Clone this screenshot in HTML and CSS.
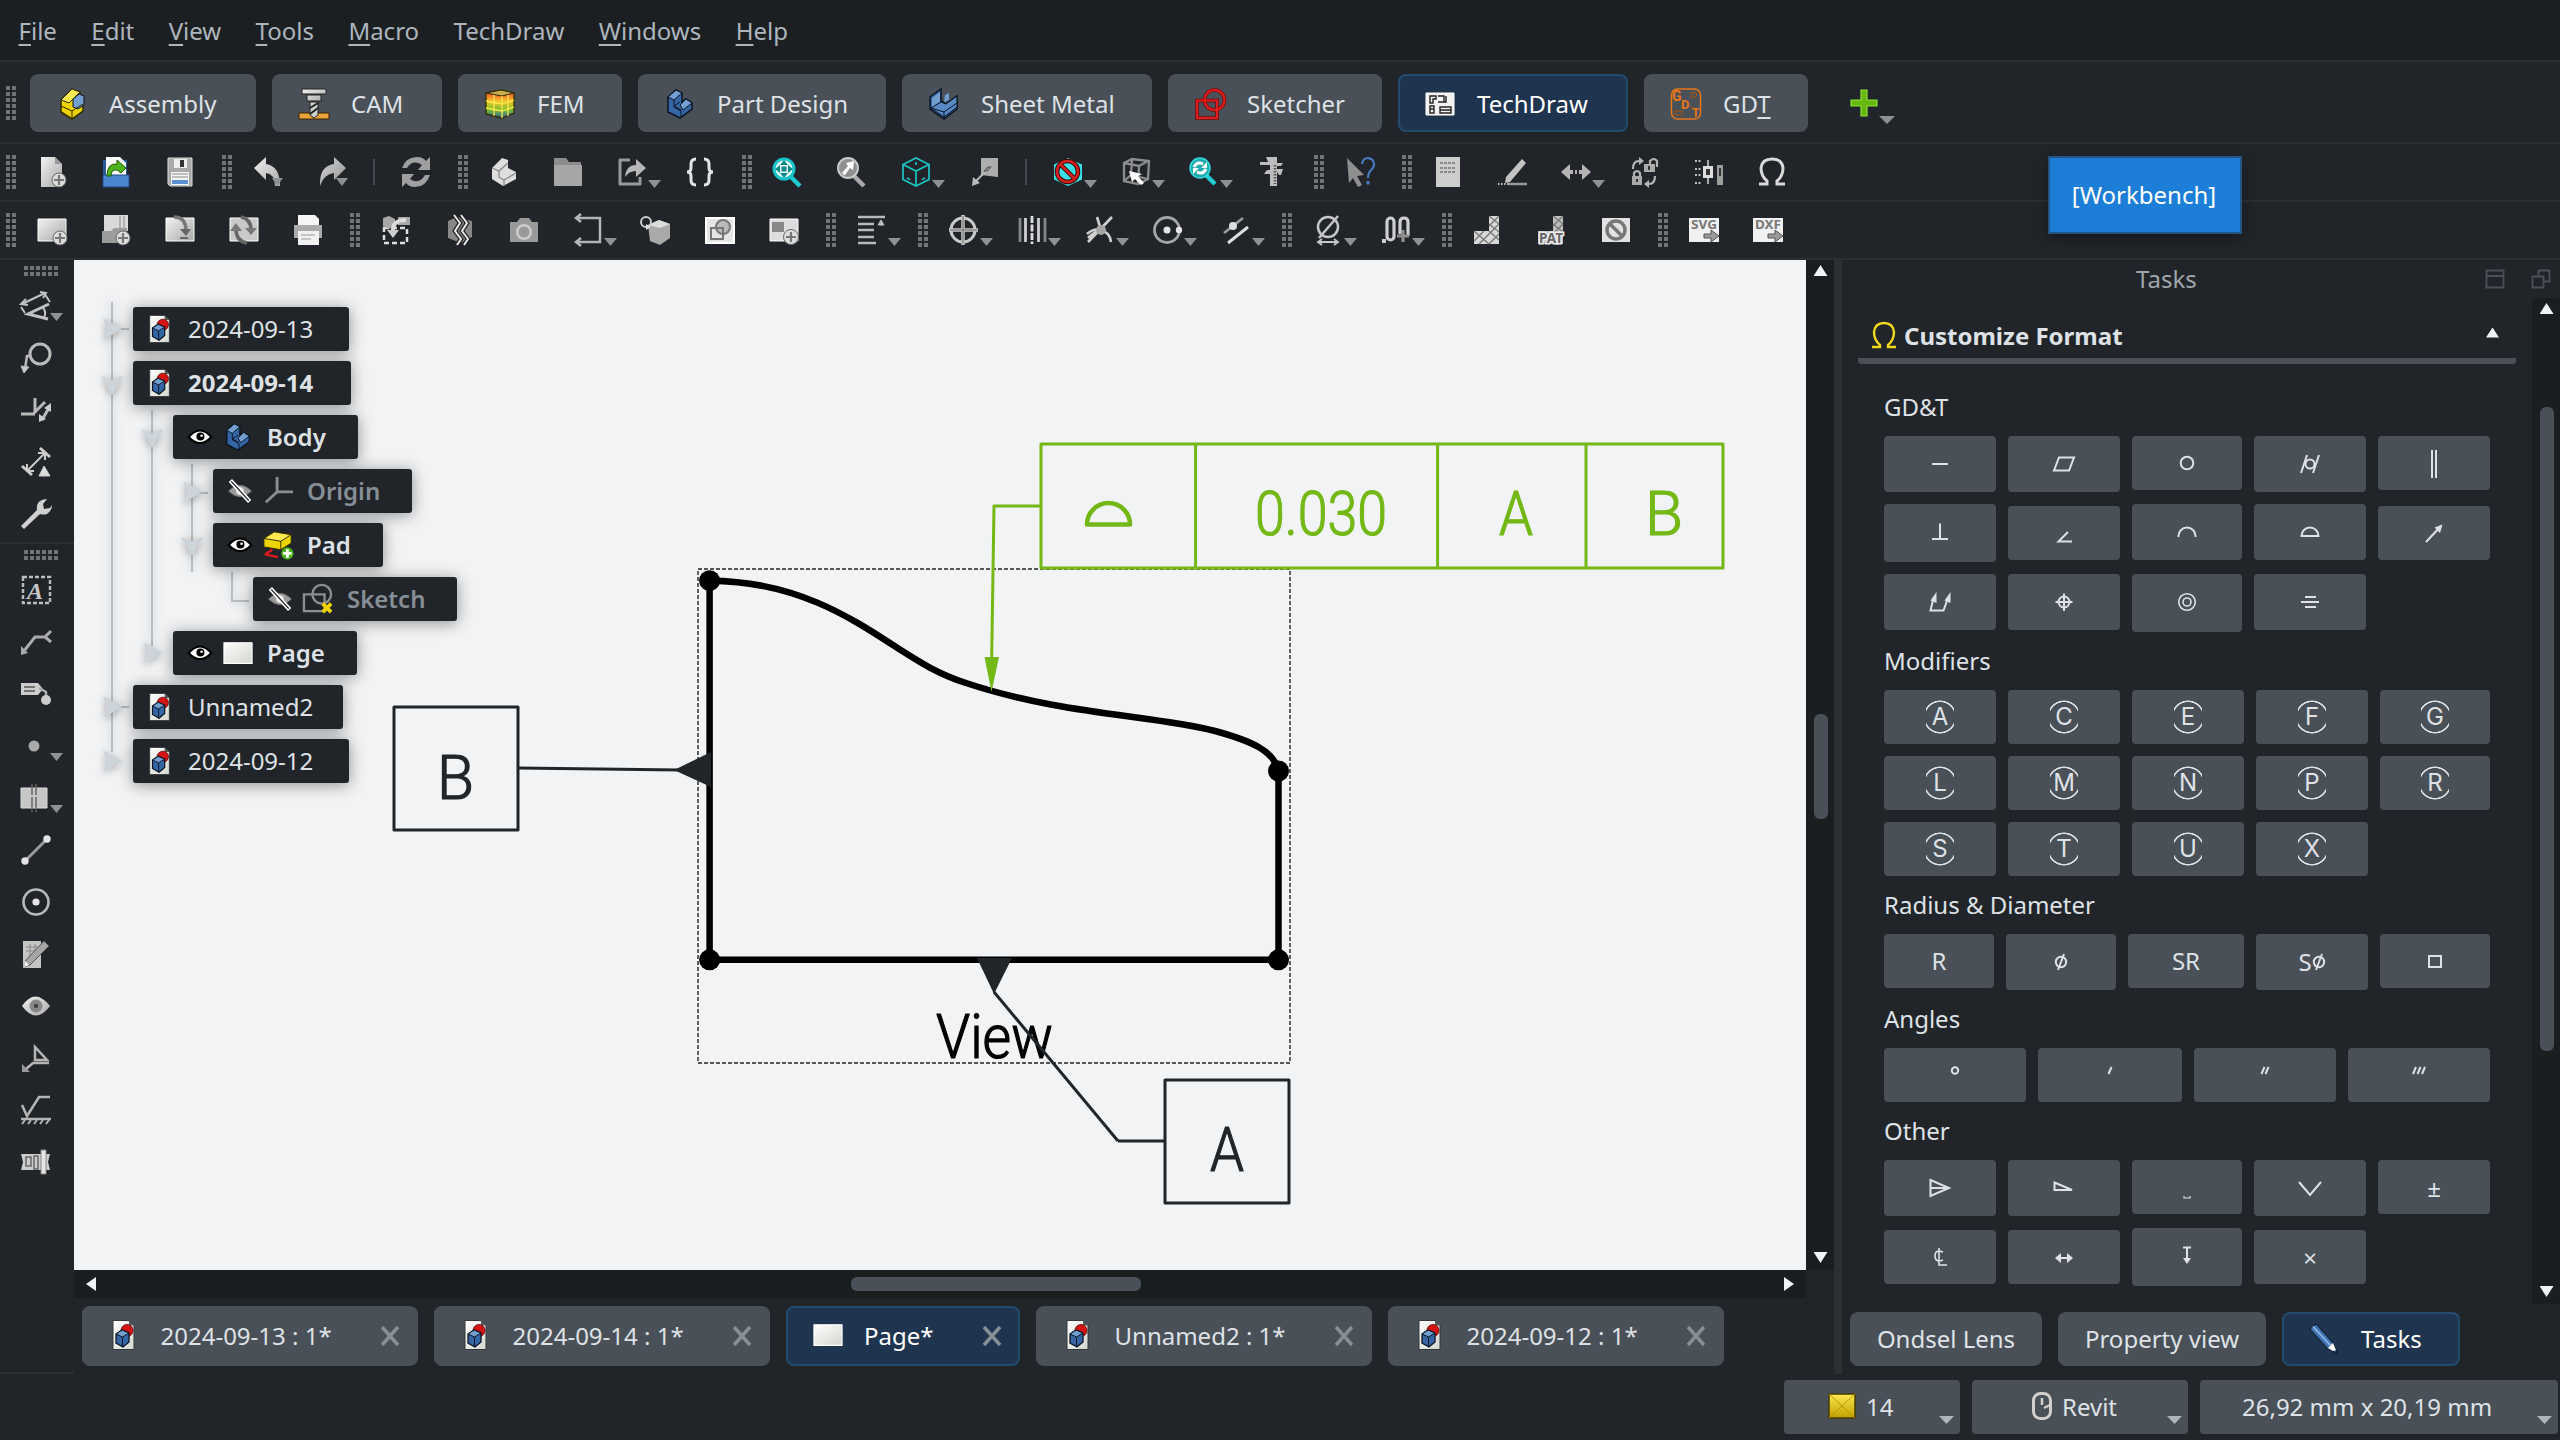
FILE: index.html
```html
<!DOCTYPE html>
<html lang="en">
<head>
<meta charset="utf-8">
<title>TechDraw</title>
<link rel="stylesheet" href="styles.css">
</head>
<body>
<svg class="defs" width="0" height="0" aria-hidden="true">
  <defs>
    <linearGradient id="g" x1="0" y1="0" x2="1" y2="1"><stop offset="0" stop-color="#f2f2f2"/><stop offset="1" stop-color="#a8a8a8"/></linearGradient>
    <linearGradient id="pg" x1="0" y1="0" x2="1" y2="1"><stop offset="0" stop-color="#fff"/><stop offset="1" stop-color="#d3d7cf"/></linearGradient>
    <linearGradient id="yl" x1="0" y1="0" x2="0" y2="1"><stop offset="0" stop-color="#fce94f"/><stop offset="1" stop-color="#c4a000"/></linearGradient>
    <linearGradient id="heat" x1="0" y1="0" x2="0" y2="1"><stop offset="0" stop-color="#ef2929"/><stop offset=".4" stop-color="#f5c52b"/><stop offset=".7" stop-color="#7bbf2a"/><stop offset="1" stop-color="#3465a4"/></linearGradient>
  </defs>
  <symbol id="doc" viewBox="0 0 32 32"><path d="M5 1.500h16l5 5v24H5z" fill="url(#pg)" stroke="#33383a"/><path d="M21 1.500v5h5z" fill="#555"/><circle cx="19" cy="11.500" r="6" fill="#d41414" stroke="#5c0000" stroke-width=".8"/><path d="M8 15l6-4 7 3v9l-6 5-7-4z" fill="#3465a4" stroke="#0b1521" stroke-width="1.300"/><path d="M8 15l6.500 3L21 14l-7-3z" fill="#729fcf" stroke="#0b1521"/><path d="M14.500 18v10" stroke="#0b1521"/></symbol>
  <symbol id="eye" viewBox="0 0 32 32"><path d="M3 16q13-15 26 0-13 14-26 0z" fill="#fff" stroke="#000" stroke-width="2.400"/><circle cx="16.500" cy="15.500" r="4.600" fill="#000"/><circle cx="17.800" cy="14.600" r="1.500" fill="#fff"/></symbol>
  <symbol id="noeye" viewBox="0 0 32 32"><path d="M3 16q13-13 26 0-13 13-26 0z" fill="#9a9a9a" stroke="#777"/><circle cx="16" cy="16" r="4.500" fill="#ddd"/><path d="M5 4l22 24" stroke="#fff" stroke-width="5"/><path d="M6 5l20 22" stroke="#222" stroke-width="1.600"/></symbol>
  <symbol id="body" viewBox="0 0 32 32"><path d="M4 9l8-7 6 3v9l4-3 6 4v6l-12 9-12-6z" fill="#3465a4" stroke="#0b1521" stroke-width="1.500"/><path d="M4 9l8-7 6 3-8 7zM16 17l6-6 6 4-9 7z" fill="#729fcf" stroke="#0b1521"/><path d="M10 12v7l7 4v6M17 22l-7-4 6-4" fill="none" stroke="#0b1521"/></symbol>
  <symbol id="sheet" viewBox="0 0 32 32"><path d="M1 5h30v22H1z" fill="url(#pg)" stroke="#fff" stroke-width="1.200"/></symbol>
</svg>

<div class="app">
  <nav class="menubar">
    <span><u>F</u>ile</span><span><u>E</u>dit</span><span><u>V</u>iew</span><span><u>T</u>ools</span><span><u>M</u>acro</span><span>TechDraw</span><span><u>W</u>indows</span><span><u>H</u>elp</span>
  </nav>

  <div class="workbenches">
    <i class="grip"></i>
    <div class="wb assembly"><svg viewBox="0 0 32 32"><path d="M5 12L16 1l8 3v8l3-1v12L16 31 5 24z" fill="#edd400" stroke="#302b00" stroke-width="1.500"/><path d="M5 12l11-11 8 3-11 11z" fill="#fce94f" stroke="#302b00"/><path d="M17 11l6-5 5 2v9l-6 4-5-2z" fill="#729fcf" stroke="#0b1521"/><path d="M5 18l11 5 11-7M16 23v8" fill="none" stroke="#302b00"/></svg>Assembly</div>
    <div class="wb cam"><svg viewBox="0 0 32 32"><path d="M4 1h24v5H4zM9 7h14v6H9z" fill="url(#g)" stroke="#222"/><path d="M1 25h30v6H1z" fill="#e9a33b" stroke="#3a2000"/><path d="M12 14h8v13l-4 3-4-3z" fill="#cfd3cf" stroke="#222"/><path d="M12 20l8-5M12 26l8-6" stroke="#222" stroke-width="2"/></svg>CAM</div>
    <div class="wb fem"><svg viewBox="0 0 32 32"><path d="M2 5l15-3 13 3v20l-12 5-16-4z" fill="url(#heat)" stroke="#302b00" stroke-width="1.300"/><path d="M2 5l15-3 13 3-12 3z" fill="#c9ad4e" stroke="#302b00"/><path d="M18 8v22M10 7v21M24 7v21M2 13l16 3 12-4M2 20l16 3 12-4" fill="none" stroke="#fce94f" stroke-width="1.300"/></svg>FEM</div>
    <div class="wb part"><svg viewBox="0 0 32 32"><use href="#body"/></svg>Part Design</div>
    <div class="wb metal"><svg viewBox="0 0 32 32"><path d="M2 9l11-8v12l5 3 11-8v13L16 31 2 21z" fill="#3465a4" stroke="#0b1521" stroke-width="1.500"/><path d="M4 10l8-6v10l-8 5zM17 7l4-2v7l-5 2z" fill="#729fcf"/><path d="M3 20l10-6 5 2 11-8v11L16 29z" fill="#5a8ac6" stroke="#0b1521"/><path d="M3 20l13 4 13-9M16 24v6" fill="none" stroke="#0b1521"/></svg>Sheet Metal</div>
    <div class="wb sketcher"><svg viewBox="0 0 32 32" fill="none"><circle cx="20.500" cy="12" r="10" stroke="#7c0909" stroke-width="3.600"/><path d="M3 12.500h20v17.500H3z" stroke="#7c0909" stroke-width="3.600"/><circle cx="20.500" cy="12" r="10" stroke="#e01b1b" stroke-width="2"/><path d="M3 12.500h20v17.500H3z" stroke="#e01b1b" stroke-width="2"/></svg>Sketcher</div>
    <div class="wb techdraw active"><svg viewBox="0 0 32 32"><path d="M2 5h28v22H2z" fill="#f2f2f2" stroke="#fff"/><path d="M6 8h6v3H9v4H6zM14 8h6v6h-6M6 18h4v7H6zM16 19h11v6H16zM16 22h11M6 21h4M22 8v6h-4" fill="none" stroke="#222" stroke-width="1.400"/></svg>TechDraw</div>
    <div class="wb tolerance"><svg viewBox="0 0 32 32"><rect x="1.500" y="1" width="29" height="30" rx="6" fill="none" stroke="#e8761a" stroke-width="1.500"/><g class="gdt"><text x="2" y="13" font-size="14">G</text><text x="11" y="21" font-size="13">D</text><text x="22" y="29" font-size="12">T</text></g><path d="M21 5h6l-1 4h-5zM20 18l3 2M5 23h7v4H5z" fill="none" stroke="#a8530d"/></svg><span>GD<u>T</u></span></div>
    <div class="tool drop add"><svg viewBox="0 0 32 32"><path d="M13 3h6v10h10v6H19v10h-6V19H3v-6h10z" fill="#67b80e" stroke="#8ae234" stroke-width="1.200"/></svg></div>
  </div>

  <div class="toolbar">
    <i class="grip"></i>
    <span class="tool"><svg viewBox="0 0 32 32"><path d="M5 1h14l7 7v23H5z" fill="url(#g)"/><path d="M19 1v7h7z" fill="#999"/><circle cx="23" cy="24" r="7" fill="#ddd" stroke="#666"/><path d="M23 19v10M18 24h10" stroke="#777" stroke-width="2.200"/></svg></span>
    <span class="tool"><svg viewBox="0 0 32 32"><path d="M3 4h24v26H3z" fill="#2a5a9c"/><path d="M6 1h14l6 6v14H6z" fill="#fafafa"/><path d="M3 19h26v12H3z" fill="#4a86cf" stroke="#204a87"/><path d="M7 20q0-13 10-12V4l9 8-5 5-4-3q-6-1-6 6z" fill="#4fb31b" stroke="#1d5c06"/></svg></span>
    <span class="tool"><svg viewBox="0 0 32 32"><path d="M4 2h24v28H6l-2-2z" fill="#a9a9a9" stroke="#ddd"/><path d="M10 3h13v9H10z" fill="#eee"/><path d="M16 4h4v7h-4z" fill="#333"/><path d="M7 16h18v13H7z" fill="#f4f4f4"/><path d="M8 18h16M8 21h16" stroke="#888"/><path d="M8 24h16v4H8z" fill="#5b8fd6"/></svg></span>
    <i class="grip"></i>
    <span class="tool"><svg viewBox="0 0 32 32"><path d="M2 12L14 1v7q14 2 14 22h-5q0-12-9-13v7z" fill="url(#g)"/><path d="M20 22h11l-6 8z" fill="#8d9196"/></svg></span>
    <span class="tool"><svg viewBox="0 0 32 32"><path d="M30 12L18 1v7Q3 10 4 30q4-12 14-13v7z" fill="url(#g)" opacity=".85"/><path d="M20 22h12l-6 8z" fill="#8d9196"/></svg></span>
    <i class="sep"></i>
    <span class="tool"><svg viewBox="0 0 32 32" fill="#9f9f9f"><path d="M2 12Q6 1 17 1q6 0 9 4l4-4v13H18l4-5q-9-6-15 3z"/><path d="M30 19q-4 12-15 12-6 0-9-4l-4 4V18h12l-4 5q9 6 15-4z"/></svg></span>
    <i class="grip"></i>
    <span class="tool"><svg viewBox="0 0 32 32"><path d="M4 12l10-10 6 2v8l8 4v7l-13 7-11-7z" fill="#dedede"/><path d="M4 12l7 3 9-8M11 15v6l5 3 12-7M16 24v6" fill="none" stroke="#888" stroke-width="1.300"/></svg></span>
    <span class="tool"><svg viewBox="0 0 32 32"><path d="M2 2h12l3 4h12v24H2z" fill="#8c8c8c"/><path d="M2 9h28v21H2z" fill="#a6a6a6"/></svg></span>
    <span class="tool drop"><svg viewBox="0 0 32 32" fill="none"><path d="M14 4H4v24h20v-7" stroke="#999" stroke-width="3" stroke-linejoin="round"/><path d="M9 21Q10 9 20 9V3l10 9-10 9v-6q-7 0-11 6z" fill="#b7b7b7"/></svg></span>
    <span class="tool"><svg viewBox="0 0 32 32" fill="none" stroke="#e3e3e3" stroke-width="3"><path d="M12 3Q7 3 7 8v4q0 4-4 4 4 0 4 4v4q0 5 5 5M20 3q5 0 5 5v4q0 4 4 4-4 0-4 4v4q0 5-5 5"/></svg></span>
    <i class="grip"></i>
    <span class="tool"><svg viewBox="0 0 32 32"><path d="M18 20l10 10" stroke="#20c9cf" stroke-width="4.500"/><circle cx="12" cy="13" r="10" fill="#e8fbfb" stroke="#15c3c9" stroke-width="3"/><path d="M12 4l4 5H8zM12 22l4-5H8zM3 13l5-4v8zM21 13l-5-4v8zM9.500 10.500h5v5h-5z" fill="#0c8a90"/></svg></span>
    <span class="tool"><svg viewBox="0 0 32 32"><path d="M18 20l10 10" stroke="#aaa" stroke-width="4.500"/><circle cx="12" cy="12" r="10" fill="#8f8f8f" stroke="#c9c9c9" stroke-width="2"/><path d="M8 19l-2-2 6-7-2-3 8-2-1 9-3-2-5 7z" fill="#fff"/></svg></span>
    <span class="tool drop"><svg viewBox="0 0 32 32" fill="none" stroke="#1cc5c0" stroke-width="1.700"><path d="M16 2l13 6.500v15L16 30 3 23.500v-15zM3 8.500L16 15l13-6.500M16 15v15M16 6v3M7 22l3 1.500M22 23.500l3-1.500"/></svg></span>
    <span class="tool"><svg viewBox="0 0 32 32"><path d="M13 2h17v19l-17-2z" fill="#adadad"/><path d="M23 10L8 25" stroke="#b9b9b9" stroke-width="2"/><path d="M16 15.500l4-1 3-4-4 1z" fill="#888" stroke="#555"/><path d="M4 30l1-9 7 6z" fill="#bbb"/></svg></span>
    <i class="sep"></i>
    <span class="tool drop"><svg viewBox="0 0 32 32"><path d="M16 2l14 6.500v15L16 30 2 23.500v-15z" fill="#38dfe4"/><g fill="none"><circle cx="15.500" cy="15.500" r="10.500" stroke="#3d0000" stroke-width="4.500"/><path d="M8 8l15 15" stroke="#3d0000" stroke-width="4.500"/><circle cx="15.500" cy="15.500" r="10.500" stroke="#d21f1f" stroke-width="2.600"/><path d="M8 8l15 15" stroke="#d21f1f" stroke-width="2.600"/></g></svg></span>
    <span class="tool drop"><svg viewBox="0 0 32 32"><path d="M4 7l8-4 17 2-1 18-10 5-14-3zM4 7l15 3 9-5M19 10l-1 18M12 3l-1 16-7 6M11 19l17 4" fill="none" stroke="#8c8c8c" stroke-width="2.300"/><path d="M9 15l3 11 3-3 6 6 3-2-6-7 4-2z" fill="#fff"/></svg></span>
    <span class="tool drop"><svg viewBox="0 0 32 32"><path d="M18 19l9 9" stroke="#20cfd5" stroke-width="4.500"/><circle cx="12" cy="12" r="10" fill="#20a9ae" stroke="#35dbe0" stroke-width="1.500"/><path d="M6 11q3-6 9-3M18 13q-3 6-9 3" fill="none" stroke="#fff" stroke-width="3"/><path d="M19 6v6h-6zM5 18v-6h6z" fill="#fff"/></svg></span>
    <span class="tool"><svg viewBox="0 0 32 32"><path d="M10 1h11v6h6l-2 3h-4v3h6l-2 6h-2l-2-3v14h-7V18H8l3-4h3V9H4V6h8z" fill="#bdbdbd"/><path d="M19 9v19" stroke="#555" stroke-dasharray="1.500 1.500" stroke-width="2.500"/></svg></span>
    <i class="grip"></i>
    <span class="tool"><svg viewBox="0 0 32 32"><path d="M3 2l17 17-7 1 5 9-4 2-5-9-4 5z" fill="#8f8f8f"/><path d="M18 8q1-6 6-6 6 1 6 6 0 4-3 6-3 3-3 8" fill="none" stroke="#4a7cc4" stroke-width="2"/><path d="M22.500 25h3v3.500h-3z" fill="#4a7cc4"/></svg></span>
    <i class="grip"></i>
    <span class="tool"><svg viewBox="0 0 32 32"><path d="M4 1h24v30H4z" fill="#cdcdcd"/><path d="M8 7h16M8 12h16M8 16h16" stroke="#777" stroke-width="1.600" stroke-dasharray="3 1"/></svg></span>
    <span class="tool"><svg viewBox="0 0 32 32"><path d="M26 3l4 4-16 19-5 1 1-6z" fill="#c4c4c4"/><path d="M2 28h10" stroke="#bbb" stroke-dasharray="1.500 1.500" stroke-width="2"/><path d="M12 28h19" stroke="#999" stroke-width="2.500"/></svg></span>
    <span class="tool drop"><svg viewBox="0 0 32 32" fill="#b4b4b4"><path d="M1 16l9-8v6h3v4h-3v6zM31 16l-9-8v6h-3v4h3v6zM15 14h2v4h-2z"/></svg></span>
    <span class="tool"><svg viewBox="0 0 32 32"><path d="M4 20h10v9H4zM16 8h11v8H16z" fill="#aaa"/><path d="M6 20v-3q3-4 6 0v3M22 8V5q4-4 7 0v6M5 13q0-8 6-8M27 20q0 8-6 8" fill="none" stroke="#b3b3b3" stroke-width="2.200"/><path d="M11 1v8l5-4zM21 24v8l-5-4z" fill="#b3b3b3"/><path d="M9 23v3M21 10v4" stroke="#333" stroke-width="2"/></svg></span>
    <span class="tool"><svg viewBox="0 0 32 32" fill="none"><path d="M3 5h7M3 27h7M3 13h7M3 19h7" stroke="#bbb" stroke-width="2" stroke-dasharray="2 1.500"/><path d="M11 10h10v12H11z" fill="#ddd"/><path d="M14 13h4v6h-4z" fill="#333"/><path d="M25 9h6v20h-6z" fill="#9d9d9d"/><path d="M28 12v8" stroke="#333" stroke-width="2"/><path d="M16 4v6M16 22v6" stroke="#aaa" stroke-width="2"/></svg></span>
    <span class="tool"><svg viewBox="0 0 32 32"><path d="M3 28h8v-3Q5 20 5 12q1-9 11-9t11 9q0 8-6 13v3h8" fill="none" stroke="#d9d9d9" stroke-width="3"/></svg></span>
  </div>

  <div class="toolbar">
    <i class="grip"></i>
    <span class="tool"><svg viewBox="0 0 32 32"><path d="M2 5h28v22H2z" fill="url(#g)" stroke="#fff"/><circle cx="24" cy="24" r="7" fill="#ddd" stroke="#666"/><path d="M24 19v10M19 24h10" stroke="#777" stroke-width="2.200"/></svg></span>
    <span class="tool"><svg viewBox="0 0 32 32"><path d="M4 1h24v16H4z" fill="#d9d9d9"/><path d="M20 2v14M24 2v14" stroke="#888"/><path d="M2 17h9l3-3h13v15H2z" fill="#9c9c9c"/><circle cx="23" cy="24" r="7" fill="#ddd" stroke="#666"/><path d="M23 19v10M18 24h10" stroke="#777" stroke-width="2.200"/></svg></span>
    <span class="tool"><svg viewBox="0 0 32 32"><path d="M2 4h28v23H2z" fill="url(#g)" stroke="#fff"/><path d="M10 3q12 0 12 14" fill="none" stroke="#777" stroke-width="3.500"/><path d="M16 15h11l-5 7zM16 23h8v2h-8z" fill="#666"/></svg></span>
    <span class="tool"><svg viewBox="0 0 32 32"><path d="M2 4h28v23H2z" fill="#c9c9c9" stroke="#fff"/><path d="M13 3q10 2 10 13M19 29Q8 27 8 15" fill="none" stroke="#666" stroke-width="3.500"/><path d="M17 14h12l-6 7zM2 17h12L8 9z" fill="#777"/></svg></span>
    <span class="tool"><svg viewBox="0 0 32 32"><path d="M6 1h17l4 4v6H6z" fill="#f5f5f5"/><path d="M2 11h28v13H2z" fill="#aaa"/><path d="M6 17h21v14H6z" fill="#f0f0f0"/><path d="M9 21h14M9 25h10" stroke="#999"/></svg></span>
    <i class="grip"></i>
    <span class="tool"><svg viewBox="0 0 32 32" fill="none"><path d="M4 14h23v15H4z" stroke="#ddd" stroke-width="2.500" stroke-dasharray="5 3"/><path d="M3 4l6-2 6 3v7l-6 3-6-3zM18 3h12v8H18z" fill="#a8a8a8"/><path d="M26 6q-14 0-13 12" stroke="#ddd" stroke-width="4"/><path d="M7 16h12l-6 8z" fill="#ccc"/></svg></span>
    <span class="tool"><svg viewBox="0 0 32 32"><path d="M4 7l9-4 15 4v16l-11 6-13-5z" fill="#888"/><path d="M10 1l6 8-5 8 6 8-4 6M17 1l6 8-5 8 6 8-4 6" fill="none" stroke="#222" stroke-width="4.500"/><path d="M10 1l6 8-5 8 6 8-4 6M17 1l6 8-5 8 6 8-4 6" fill="none" stroke="#e8e8e8" stroke-width="2"/></svg></span>
    <span class="tool"><svg viewBox="0 0 32 32"><path d="M2 8h7l3-4h9l3 4h6v20H2z" fill="#999"/><circle cx="16" cy="18" r="8" fill="#ccc"/><circle cx="16" cy="18" r="5.500" fill="#999"/></svg></span>
    <span class="tool drop"><svg viewBox="0 0 32 32" fill="none" stroke="#b4b4b4" stroke-width="2.500"><path d="M6 4h22v24H6M9 0L4 4l5 4M9 24l-5 4 5 4"/></svg></span>
    <span class="tool"><svg viewBox="0 0 32 32"><path d="M8 11l11-5 11 4v14l-10 7-10-4z" fill="#a9a9a9"/><path d="M8 11l12 3 10-4-11-4z" fill="#ddd"/><circle cx="6" cy="8" r="5" fill="none" stroke="#ccc" stroke-width="2"/><path d="M6 10l5 3-5 3z" fill="#ddd"/></svg></span>
    <span class="tool"><svg viewBox="0 0 32 32" fill="none" stroke="#777" stroke-width="2"><path d="M2 4h28v25H2z" fill="#e5e5e5" stroke="#fff"/><circle cx="19" cy="13" r="7" fill="#bbb"/><path d="M7 14h12v11H7z"/></svg></span>
    <span class="tool"><svg viewBox="0 0 32 32"><path d="M2 5h28v22H2z" fill="#ddd" stroke="#fff"/><path d="M4 8h12v10H4z" fill="#888"/><circle cx="23" cy="23" r="7.500" fill="#ddd" stroke="#666"/><path d="M23 18v10M18 23h10" stroke="#777" stroke-width="2.200"/></svg></span>
    <i class="grip"></i>
    <span class="tool drop"><svg viewBox="0 0 32 32" stroke="#b9b9b9" stroke-width="2.400"><path d="M2 3h27M2 10h16M2 16h16M2 23h16M2 29h18"/><path d="M25 6v6M22 11l3-5 3 5z" fill="#b9b9b9" stroke-width="1"/></svg></span>
    <i class="grip"></i>
    <span class="tool drop"><svg viewBox="0 0 32 32" fill="none" stroke="#c9c9c9"><circle cx="15" cy="16" r="12" stroke-width="3"/><path d="M15 1v30M1 16h29" stroke-width="3.500"/><path d="M15 2v28M2 16h27" stroke="#666" stroke-width="1"/></svg></span>
    <span class="tool drop"><svg viewBox="0 0 32 32" stroke-width="2.800"><path d="M4 4v24M29 4v24" stroke="#858585"/><path d="M9.500 4v24M22.500 4v24" stroke="#cfcfcf"/><path d="M16 2v28" stroke="#ddd" stroke-dasharray="7 1.500"/></svg></span>
    <span class="tool drop"><svg viewBox="0 0 32 32" fill="none" stroke="#cfcfcf" stroke-width="2.600"><path d="M13 3l4 13M28 3L4 28M3 20q7-6 13-4 10 2 11 12M4 24q6-6 12-8"/><circle cx="17" cy="16" r="5" fill="#a5a5a5" stroke="none"/></svg></span>
    <span class="tool drop"><svg viewBox="0 0 32 32" fill="none"><circle cx="15" cy="16" r="12.500" stroke="#a5a5a5" stroke-width="2.800"/><circle cx="15" cy="16" r="3.500" fill="#e5e5e5"/><circle cx="27" cy="16" r="3.200" fill="#e5e5e5"/></svg></span>
    <span class="tool drop"><svg viewBox="0 0 32 32"><path d="M4 19L23 4" stroke="#999" stroke-width="2.800"/><path d="M8 29L28 13" stroke="#dedede" stroke-width="3"/><circle cx="13" cy="12" r="4" fill="#ddd"/></svg></span>
    <i class="grip"></i>
    <span class="tool drop"><svg viewBox="0 0 32 32" fill="none" stroke="#c6c6c6" stroke-width="2.500"><circle cx="16" cy="13" r="10"/><path d="M7 24L26 2"/><path d="M6 28h20M10 25l-4 3 4 3M22 25l4 3-4 3" stroke-width="1.800"/></svg></span>
    <span class="tool drop"><svg viewBox="0 0 32 32" fill="none" stroke="#cfcfcf" stroke-width="3.200"><rect x="7" y="4" width="7" height="22" rx="3.500"/><path d="M20 20V8q0-4 4-4t4 4v14"/><path d="M23 16v12M17 22h12" stroke="#8f8f8f"/><path d="M2 27h4" stroke-width="4"/></svg></span>
    <i class="grip"></i>
    <span class="tool"><svg viewBox="0 0 32 32"><path d="M17 2h10v28H2V17h15z" fill="#d8d8d8"/><path d="M17 2l10 8M17 10l10 8M2 17l15 13M17 17l10 9M27 2L17 12M27 10L7 30M27 20L17 30M12 17L2 27" stroke="#777" stroke-width="1.300"/></svg></span>
    <span class="tool"><svg viewBox="0 0 32 32"><path d="M17 2h10v28H2V17h15z" fill="#bdbdbd"/><path d="M17 2l10 8M17 10l10 8M27 2L17 12M27 10l-9 9" stroke="#777" stroke-width="1.300"/><text class="ico-text" x="3" y="29" textLength="24" lengthAdjust="spacingAndGlyphs" font-size="14" fill="#666" stroke="#eee" stroke-width="3" paint-order="stroke">PAT</text></svg></span>
    <span class="tool"><svg viewBox="0 0 32 32"><path d="M2 4h28v24H2z" fill="#e2e2e2"/><circle cx="16" cy="16" r="9" fill="none" stroke="#777" stroke-width="3.500"/><path d="M10 10l12 12" stroke="#777" stroke-width="3.500"/></svg></span>
    <i class="grip"></i>
    <span class="tool"><svg viewBox="0 0 32 32"><path d="M1 4h30v24H1z" fill="#f0f0f0"/><text class="ico-text" x="3" y="15" textLength="26" lengthAdjust="spacingAndGlyphs" font-size="13" fill="#777">SVG</text><path d="M16 20h7v-4l8 6-8 6v-4h-7z" fill="#999" stroke="#555"/></svg></span>
    <span class="tool"><svg viewBox="0 0 32 32"><path d="M1 4h30v24H1z" fill="#f0f0f0"/><text class="ico-text" x="3" y="15" textLength="26" lengthAdjust="spacingAndGlyphs" font-size="13" fill="#777">DXF</text><path d="M16 20h7v-4l8 6-8 6v-4h-7z" fill="#999" stroke="#555"/></svg></span>
  </div>

  <div class="main">
    <aside class="sidebar">
      <i class="vgrip"></i>
      <span class="vtool drop"><svg viewBox="0 0 32 32" fill="none" stroke="#c2c2c2"><path d="M29 14L8 24l20 5" stroke-width="3"/><path d="M2 14L25 3" stroke-width="2"/><path d="M1 17l4 6M24 3l6 9M6 9l-5 5 7 1M20 2l6 1-3 5M22 17q5 4 2 11" stroke-width="2"/></svg></span>
      <span class="vtool"><svg viewBox="0 0 32 32" fill="none" stroke="#b9b9b9"><circle cx="20" cy="12" r="10" stroke-width="3"/><path d="M11 14H7L5 27" stroke-width="2.500"/><path d="M1 24l3 7 5-6z" fill="#ccc"/></svg></span>
      <span class="vtool"><svg viewBox="0 0 32 32" fill="none" stroke="#b9b9b9" stroke-width="3"><path d="M1 20h14M15 4v14M14 19L25 8"/><path d="M22 26l8-14" stroke-width="3"/><path d="M24 14l7-5v9zM19 20v8l7-3z" fill="#ccc" stroke="none"/></svg></span>
      <span class="vtool"><svg viewBox="0 0 32 32" fill="none" stroke="#ccc"><path d="M2 20l10 9M20 2l10 9" stroke-width="3"/><path d="M8 24L24 8" stroke-width="2"/><path d="M7 18v7h7M18 7h7v7" stroke-width="2"/><path d="M24 20l6 10H19z" fill="#ddd"/></svg></span>
      <span class="vtool"><svg viewBox="0 0 32 32"><path d="M1 28L17 12q-1-6 3-9 3-2 7-2l-4 5 1 5 6-1 2-3q0 6-5 9-3 1-7 0L4 31z" fill="#d0d0d0"/></svg></span>
      <hr>
      <i class="vgrip"></i>
      <span class="vtool"><svg viewBox="0 0 32 32"><path d="M3 3h27v26H3z" fill="none" stroke="#bbb" stroke-width="2.500" stroke-dasharray="4 2"/><text class="ico-a" x="7" y="25" font-size="24">A</text></svg></span>
      <span class="vtool"><svg viewBox="0 0 32 32" fill="none" stroke="#aaa" stroke-width="3"><path d="M4 25L15 11h11M31 5l-6 6 6 5"/><path d="M1 29v-9l7 7z" fill="#aaa" stroke="none"/></svg></span>
      <span class="vtool"><svg viewBox="0 0 32 32" fill="none"><path d="M1 5h17l5 6-5 6H1z" fill="#ccc"/><path d="M4 9h11M4 13h11" stroke="#555" stroke-width="1.500"/><path d="M19 10l7 4v6" stroke="#aaa" stroke-width="2.500"/><circle cx="26" cy="22" r="5" fill="#ccc"/></svg></span>
      <span class="vtool drop"><svg viewBox="0 0 32 32"><circle cx="14" cy="16" r="5.500" fill="#a9a9a9"/></svg></span>
      <span class="vtool drop"><svg viewBox="0 0 32 32"><path d="M1 6h26v20H1z" fill="#c6c6c6" stroke="#ddd"/><path d="M12 2v28M16 2v28" stroke="#666" stroke-width="1.500" stroke-dasharray="11 2"/></svg></span>
      <span class="vtool"><svg viewBox="0 0 32 32"><path d="M5 27L27 5" stroke="#999" stroke-width="3"/><circle cx="5" cy="27" r="3.700" fill="#e5e5e5"/><circle cx="27" cy="5" r="3.700" fill="#e5e5e5"/></svg></span>
      <span class="vtool"><svg viewBox="0 0 32 32"><circle cx="16" cy="16" r="12.500" fill="none" stroke="#b9b9b9" stroke-width="2.600"/><circle cx="16" cy="16" r="3.600" fill="#e5e5e5"/></svg></span>
      <span class="vtool"><svg viewBox="0 0 32 32"><path d="M3 3h18v27H3z" fill="#c4c4c4"/><path d="M6 9h12M6 13h12M10 6v12M15 6v12" stroke="#888"/><path d="M24 3l5 5-19 19-6 2 2-7z" fill="#a5a5a5" stroke="#555"/><path d="M5 23l4 4-5 2z" fill="#fff"/></svg></span>
      <span class="vtool"><svg viewBox="0 0 32 32"><path d="M2 16Q15-3 30 16 16 35 2 16z" fill="url(#g)"/><circle cx="16" cy="16" r="6.500" fill="#888"/><circle cx="16" cy="16" r="2.200" fill="#444"/></svg></span>
      <span class="vtool"><svg viewBox="0 0 32 32" fill="none" stroke="#b5b5b5" stroke-width="2.500"><path d="M15 5v13h12zM29 21H13L6 27"/><path d="M2 22v8h8z" fill="#999" stroke="none"/></svg></span>
      <span class="vtool"><svg viewBox="0 0 32 32" fill="none" stroke="#b5b5b5" stroke-width="2.500"><path d="M2 11l5 11L19 3h11M1 25h30"/><path d="M5 26l-3 4M11 26l-3 4M17 26l-3 4M23 26l-3 4M29 26l-3 4" stroke-width="2"/></svg></span>
      <span class="vtool"><svg viewBox="0 0 32 32"><path d="M1 8h29l-2 8 2 8H1l2-8z" fill="#ccc"/><path d="M6 11h5v9H6zM14 10h4v13h-4z" fill="none" stroke="#666" stroke-width="1.500"/><path d="M21 4h5v24h-5z" fill="#e5e5e5" stroke="#888"/></svg></span>
    </aside>

    <section class="center">
      <div class="view">
        <div class="canvas">
          <svg class="drawing" viewBox="74 260 1732 1010" width="1732" height="1010">
            <g class="branches"><path d="M112 302v450M112 329h17M112 707h17M152 410v236M192 464v108M192 493h16M232 572v29h17"/></g>
            <g class="arrows"><path d="M103 318l19 11-19 11 4-11zM103 696l19 11-19 11 4-11zM103 750l19 11-19 11 4-11zM143 642l19 11-19 11 4-11zM183 481l19 11-19 11 4-11z"/><path d="M101 376l11 19 11-19-11 4zM141 429l11 19 11-19-11 4zM181 537l11 19 11-19-11 4z"/></g>
            <g class="datum">
              <rect x="394" y="707" width="124" height="123"/><path d="M518 768L680 770"/>
              <path d="M1118 1141h47"/><rect x="1165" y="1080" width="124" height="123"/>
            </g>
            <path class="bounds" d="M698 569h592v494H698z"/>
            <path class="edge" d="M709.600 959.800V580.700C795 581 850 617 896 647C915 659 935 673 966 683C1062 715 1153 715 1215 731C1252 741 1274 751 1278.500 771V959.800z"/>
            <g class="vertex"><circle cx="709.600" cy="580.700" r="10.500"/><circle cx="1278.500" cy="771" r="10.500"/><circle cx="709.600" cy="959.800" r="10.500"/><circle cx="1278.500" cy="959.800" r="10.500"/></g>
            <path class="datum-tip" d="M711 752v35l-37-17zM977 958h35l-18 36z"/>
            <g class="frame"><path d="M1041 444h682v124h-682zM1195.600 444v124M1437.600 444v124M1586 444v124M1041 506h-47L991.500 670"/><path d="M1087 524.500a21.500 21.500 0 0 1 43 0z" stroke-width="4.500"/><path class="tip" d="M984.500 657h14.500l-7.500 35z"/></g>
            <g class="iso green"><text x="1255" y="535" textLength="132" lengthAdjust="spacingAndGlyphs">0.030</text><text x="1499" y="535" textLength="34" lengthAdjust="spacingAndGlyphs">A</text><text x="1645" y="535" textLength="38" lengthAdjust="spacingAndGlyphs">B</text></g>
            <g class="iso"><text x="437" y="799" textLength="37" lengthAdjust="spacingAndGlyphs">B</text><text x="1210" y="1171" textLength="34" lengthAdjust="spacingAndGlyphs">A</text></g>
            <g class="iso black"><text x="936" y="1058" textLength="117" lengthAdjust="spacingAndGlyphs">View</text></g>
            <path class="datum-line" d="M994 992L1118 1141"/>
          </svg>
          <div class="tree">
            <div class="node date"><svg><use href="#doc"/></svg><b>2024-09-13</b></div>
            <div class="node date current"><svg><use href="#doc"/></svg><b>2024-09-14</b></div>
            <div class="node l1"><svg><use href="#eye"/></svg><svg><use href="#body"/></svg><b>Body</b></div>
            <div class="node l2 off"><svg><use href="#noeye"/></svg><svg viewBox="0 0 32 32" fill="none" stroke="#8e8e8e" stroke-width="3"><path d="M15 1v16h17M15 17L3 28"/></svg><b>Origin</b></div>
            <div class="node l2"><svg><use href="#eye"/></svg><svg viewBox="0 0 32 32"><path d="M2 26l8-5M2 26l14 3" stroke="#e01b1b" stroke-width="2.500"/><path d="M1 9l11-7 18 3v9l-11 7-18-3z" fill="#edd400" stroke="#302b00"/><path d="M1 9l11-7 18 3-11 7z" fill="#fce94f" stroke="#302b00"/><path d="M19 12v9" stroke="#302b00"/><circle cx="26" cy="25" r="6.500" fill="#4fb31b"/><path d="M26 20.500v9M21.500 25h9" stroke="#fff" stroke-width="3"/></svg><b>Pad</b></div>
            <div class="node l3 off"><svg><use href="#noeye"/></svg><svg viewBox="0 0 32 32" fill="none" stroke="#8e8e8e" stroke-width="2.500"><circle cx="20" cy="11" r="10"/><path d="M1 11h22v18H1z"/><path d="M21 21l9 9M30 21l-9 9" stroke="#edd400" stroke-width="4"/></svg><b>Sketch</b></div>
            <div class="node l1"><svg><use href="#eye"/></svg><svg><use href="#sheet"/></svg><b>Page</b></div>
            <div class="node wide"><svg><use href="#doc"/></svg><b>Unnamed2</b></div>
            <div class="node date"><svg><use href="#doc"/></svg><b>2024-09-12</b></div>
          </div>
        </div>
        <div class="vscroll"><i class="up"></i><i class="thumb"></i><i class="down"></i></div>
      </div>
      <div class="hscroll"><i class="left"></i><i class="thumb"></i><i class="right"></i></div>
      <div class="tabs">
        <div class="tab"><svg><use href="#doc"/></svg>2024-09-13 : 1*<svg class="close" viewBox="0 0 20 20"><path d="M2 1l16 18M18 1L2 19"/></svg></div>
        <div class="tab"><svg><use href="#doc"/></svg>2024-09-14 : 1*<svg class="close" viewBox="0 0 20 20"><path d="M2 1l16 18M18 1L2 19"/></svg></div>
        <div class="tab page active"><svg><use href="#sheet"/></svg>Page*<svg class="close" viewBox="0 0 20 20"><path d="M2 1l16 18M18 1L2 19"/></svg></div>
        <div class="tab"><svg><use href="#doc"/></svg>Unnamed2 : 1*<svg class="close" viewBox="0 0 20 20"><path d="M2 1l16 18M18 1L2 19"/></svg></div>
        <div class="tab"><svg><use href="#doc"/></svg>2024-09-12 : 1*<svg class="close" viewBox="0 0 20 20"><path d="M2 1l16 18M18 1L2 19"/></svg></div>
      </div>
    </section>

    <i class="splitter"></i>

    <section class="panel">
      <header class="panel-title"><span>Tasks</span>
        <svg viewBox="0 0 20 20"><path d="M1.500 1.500h17v17h-17zM2 7h16"/></svg>
        <svg viewBox="0 0 20 20"><path d="M1.500 7.500h11v11h-11zM7.500 7V1.500h11v11H13"/></svg>
      </header>
      <div class="panel-body">
        <div class="task">
          <div class="task-head"><svg viewBox="0 0 26 28"><path d="M1 26h8v-2Q3 19 3 11q1-9 10-9t10 9q0 8-6 13v2h8"/></svg><b>Customize Format</b><i></i></div>
          <h3 class="first">GD&amp;T</h3>
          <div class="grid gdt-grid">
            <button><svg viewBox="0 0 32 32"><path d="M8 16h16"/></svg></button>
            <button><svg viewBox="0 0 32 32"><path d="M11 9.500h15l-5 13H6z"/></svg></button>
            <button class="short"><svg viewBox="0 0 32 32"><circle cx="16" cy="16" r="6.300"/></svg></button>
            <button><svg viewBox="0 0 32 32"><path d="M7 25l6-18M19 25l6-18"/><circle cx="16" cy="16" r="4.500"/></svg></button>
            <button class="short"><svg viewBox="0 0 32 32"><path d="M14 3v28M18 3v28"/></svg></button>
            <button class="tall"><svg viewBox="0 0 32 32"><path d="M16 6.500V22M8 22h16"/></svg></button>
            <button class="short low"><svg viewBox="0 0 32 32"><path d="M20 15L10.500 24.500H24"/></svg></button>
            <button><svg viewBox="0 0 32 32"><path d="M7.500 21v-1a8.500 8.500 0 0 1 17 0v1"/></svg></button>
            <button><svg viewBox="0 0 32 32"><path d="M7.500 20a8.500 8.500 0 0 1 17 0z"/></svg></button>
            <button class="short low"><svg viewBox="0 0 32 32"><path d="M8 25L23 9"/><path d="M16.500 10.500L24.500 7.500 22 16z" class="fill"/></svg></button>
            <button><svg viewBox="0 0 32 32"><path d="M9.500 12L6.500 24.500h13L24 12"/><path d="M12.500 6v11l-6-2.500zM26.500 6v11l-6-2.500z" class="fill"/></svg></button>
            <button><svg viewBox="0 0 32 32"><circle cx="16" cy="16" r="5.500"/><path d="M16 7.500v17.500M7.500 16h17"/></svg></button>
            <button class="tall"><svg viewBox="0 0 32 32"><circle cx="16" cy="15" r="8.300" class="mid"/><circle cx="16" cy="15" r="4" class="mid"/></svg></button>
            <button><svg viewBox="0 0 32 32"><path d="M7 16h18M11 11h11M11 21h11"/></svg></button>
          </div>
          <h3>Modifiers</h3>
          <div class="grid mod-grid">
            <button><span class="ring">A</span></button><button><span class="ring">C</span></button><button><span class="ring">E</span></button><button><span class="ring">F</span></button><button><span class="ring">G</span></button>
            <button><span class="ring">L</span></button><button><span class="ring">M</span></button><button><span class="ring">N</span></button><button><span class="ring">P</span></button><button><span class="ring">R</span></button>
            <button><span class="ring">S</span></button><button><span class="ring">T</span></button><button><span class="ring">U</span></button><button><span class="ring">X</span></button>
          </div>
          <h3>Radius &amp; Diameter</h3>
          <div class="grid rad-grid">
            <button class="short">R</button>
            <button><svg viewBox="0 0 32 32"><circle cx="16" cy="17" r="5.200"/><path d="M13 25l6-16"/></svg></button>
            <button class="short">SR</button>
            <button>S<svg class="dia" viewBox="0 0 14 32"><circle cx="7" cy="17" r="5.200"/><path d="M4 25l6-16"/></svg></button>
            <button class="short"><svg viewBox="0 0 32 32"><path d="M10 12h12v11H10z"/></svg></button>
          </div>
          <h3>Angles</h3>
          <div class="grid ang-grid">
            <button><svg viewBox="0 0 32 32"><circle cx="16" cy="11.500" r="3.200"/></svg></button>
            <button><svg viewBox="0 0 32 32"><path d="M17.500 8l-3 7"/></svg></button>
            <button><svg viewBox="0 0 32 32"><path d="M15.500 8l-3 7M19.500 8l-3 7"/></svg></button>
            <button><svg viewBox="0 0 32 32"><path d="M13 8l-3 7M17.500 8l-3 7M22 8l-3 7"/></svg></button>
          </div>
          <h3>Other</h3>
          <div class="grid oth-grid">
            <button><svg viewBox="0 0 32 32"><path d="M6.500 8L25 16 6.500 24zM6 16h19"/></svg></button>
            <button><svg viewBox="0 0 32 32"><path d="M6.500 10.500L24 18H6.500z"/></svg></button>
            <button class="short"><svg viewBox="0 0 32 32"><path d="M13 25v2h6v-2" class="thin"/></svg></button>
            <button><svg viewBox="0 0 32 32"><path d="M5 10l11 13L27 10"/></svg></button>
            <button class="short">±</button>
            <button class="short low"><svg viewBox="0 0 32 32"><path d="M15 7v17h8M19 11q-8-3-8 4t8 4" class="mid"/></svg></button>
            <button class="short low"><svg viewBox="0 0 32 32"><path d="M8 17h16"/><path d="M7 17l6-5v10zM25 17l-6-5v10z" class="fill"/></svg></button>
            <button class="tall"><svg viewBox="0 0 32 32"><path d="M12 6.500h8M16 6.500V20"/><path d="M12 17h8l-4 6z" class="fill"/></svg></button>
            <button class="short low">×</button>
          </div>
        </div>
        <div class="pscroll"><i class="up"></i><i class="thumb"></i><i class="down"></i></div>
      </div>
      <div class="panel-tabs">
        <div class="ptab">Ondsel Lens</div><div class="ptab">Property view</div>
        <div class="ptab active"><svg viewBox="0 0 32 32"><path d="M2 7l6-5 17 19 4 10-9-4z" fill="#3f74b5" stroke="#0b1521"/><path d="M5 4.500l18 19.500" stroke="#8fb4e0" stroke-width="1.800"/><path d="M20 26l5-5 3 7-3 1z" fill="#fff"/></svg>Tasks</div>
      </div>
    </section>
  </div>

  <footer class="status">
    <div class="cell count"><svg viewBox="0 0 28 26"><path d="M1 1h26v24H1z" fill="url(#yl)" stroke="#463b00" stroke-width="1.500"/><path d="M1 1l13 12L27 1M1 25L14 13l13 12" fill="none" stroke="#b59a0c"/></svg>14</div>
    <div class="cell nav"><svg viewBox="0 0 20 28"><rect x="1.500" y="1.500" width="17" height="25" rx="7" fill="none" stroke="#d3cfcb" stroke-width="3"/><path d="M10 6v7M18 13l-6 3" stroke="#d3cfcb" stroke-width="2.500"/></svg>Revit</div>
    <div class="cell dims">26,92 mm x 20,19 mm</div>
  </footer>

  <div class="tooltip">[Workbench]</div>
</div>
</body>
</html>
```
FILE: styles.css
```css
* { box-sizing: border-box; }
html, body { margin: 0; background: #212529; }
.app {
  position: relative;
  width: 2560px; height: 1440px;
  display: flex; flex-direction: column;
  overflow: hidden;
  background: #212529;
  color: #dee2e6;
  font: 24px "Noto Sans", "Open Sans", sans-serif;
  white-space: nowrap;
}
.defs { position: absolute; }
svg { flex: none; display: block; overflow: visible; }
u { text-decoration: underline; text-decoration-thickness: 2px; text-underline-offset: 4px; }

/* menu */
.menubar {
  height: 62px; flex: none;
  display: flex; align-items: center; gap: 34.4px;
  padding-left: 18.5px;
  background: #1b1f22; border-bottom: 2px solid #2b3035;
  color: #adb5bd;
}

/* workbench selector */
.workbenches {
  height: 82px; flex: none;
  display: flex; align-items: center;
  padding-top: 2px;
  border-bottom: 2px solid #2b3035;
}
.wb {
  height: 58px; margin-right: 16px; padding: 1px 0 0 26px;
  display: flex; align-items: center;
  background: #495057; border-radius: 8px;
}
.assembly { width: 226px; }
.cam { width: 170px; }
.fem { width: 164px; }
.part { width: 248px; }
.metal { width: 250px; }
.sketcher { width: 214px; }
.techdraw { width: 230px; }
.tolerance { width: 164px; }
.wb svg { width: 32px; height: 32px; margin-right: 21px; }
.active { background: #1f344f; box-shadow: inset 0 0 0 2px #244a6c; color: #fff; }
.gdt text { fill: #e8761a; font-family: "Roboto", sans-serif; font-weight: 700; }

/* tool rows */
.toolbar {
  height: 58px; flex: none;
  display: flex; align-items: center;
  border-bottom: 2px solid #2b3035;
}
.grip, .vgrip {
  flex: none;
  background:
    repeating-linear-gradient(90deg, transparent 0 4px, #212529 4px 6px),
    repeating-linear-gradient(180deg, #6f7478 0 4px, #212529 4px 6px);
}
.grip { width: 10px; height: 34px; margin: 0 4px 0 10px; }
.grip:first-child { margin: 0 4px 0 6px; }
.workbenches .grip:first-child { margin: 0 14px 0 6px; }
.sep { width: 2px; height: 26px; margin: 0 9px; background: #43494e; }
.tool {
  position: relative; flex: none;
  width: 64px; height: 56px;
  display: flex; align-items: center; padding-left: 16px;
}
.tool svg, .vtool svg { width: 32px; height: 32px; }
.tool.drop { width: 68px; }
.drop::after {
  content: ""; position: absolute; left: 48px; top: 36px;
  width: 13px; height: 8px; background: #8d9196;
  clip-path: polygon(0 0, 100% 0, 50% 100%);
}
.add { margin-left: 8px; }
.add.drop::after { top: 41px; width: 16px; left: 47px; }
.ico-text { font-family: "Noto Sans", sans-serif; font-weight: 700; }
.ico-a { font-family: "Liberation Serif", serif; font-weight: 700; font-style: italic; fill: #c8c8c8; }

/* body */
.main { height: 1114px; flex: none; display: flex; }
.sidebar {
  width: 74px; flex: none;
  display: flex; flex-direction: column; align-items: flex-start;
  padding-top: 6px; border-bottom: 2px solid #2b3035;
}
.vgrip { width: 34px; height: 10px; margin: 0 0 4px 24px; }
.vtool { position: relative; width: 74px; height: 52px; padding: 10px 0 0 20px; }
.vtool.drop::after { left: 50px; top: 33px; }
.sidebar hr { width: 74px; margin: 2px 0 6px; border: 0; border-top: 2px solid #2b3035; }

.center { width: 1760px; flex: none; }
.view { display: flex; height: 1010px; }
.canvas { position: relative; width: 1732px; height: 1010px; background: #f1f3f5; }
.branches { fill: none; stroke: #b9bdc1; stroke-width: 2; filter: drop-shadow(0 0 5px rgba(0,0,0,.25)); }
.arrows { fill: #cdd4da; filter: drop-shadow(0 2px 4px rgba(0,0,0,.3)); }
.datum, .datum-line { fill: none; stroke: #212529; stroke-width: 3; stroke-linejoin: round; }
.datum-tip { fill: #212529; }
.bounds { fill: none; stroke: #222; stroke-width: 1.400; stroke-dasharray: 4 2; }
.edge { fill: none; stroke: #000; stroke-width: 6.500; stroke-linejoin: round; }
.frame { fill: none; stroke: #74b816; stroke-width: 3; stroke-linejoin: round; }
.tip { fill: #74b816; stroke: none; }
.iso text { font: 300 62px "Roboto", sans-serif; fill: #212529; stroke: #212529; stroke-width: 1.200; stroke-linejoin: round; }
.iso.green text { fill: #74b816; stroke: #74b816; }
.iso.black text { fill: #000; stroke: #000; }

.tree {
  position: absolute; left: 59px; top: 47px;
  display: flex; flex-direction: column; align-items: flex-start; gap: 10px;
}
.node {
  height: 44px; padding: 0 32px 0 12px;
  display: flex; align-items: center; gap: 7px;
  background: #212529; border-radius: 3px;
  box-shadow: 0 2px 16px rgba(0,0,0,.42);
}
.node svg { width: 30px; height: 30px; }
.node b { font-weight: 600; padding: 0 0 2px 7px; }
.date, .wide { gap: 9px; }
.date b, .wide b { font-weight: 400; padding-left: 4px; }
.date { padding-right: 36px; }
.wide { padding-right: 30px; }
.current { padding-right: 38px; }
.current b { font-weight: 700; }
.l1 { margin-left: 40px; }
.l2 { margin-left: 80px; }
.l3 { margin-left: 120px; }
.l1 svg:first-child, .l2 svg:first-child, .l3 svg:first-child { width: 28px; height: 28px; margin: 0 2px 0 1px; }
.off b { color: #868e96; }

/* scrollbars */
.vscroll, .pscroll {
  width: 28px; background: #1a1e21;
  display: flex; flex-direction: column; align-items: center;
  padding: 5px 0 7px 1px;
}
.up, .down, .left, .right { flex: none; background: #f1f3f5; }
.up { width: 14px; height: 11px; clip-path: polygon(50% 0, 100% 100%, 0 100%); }
.down { width: 14px; height: 11px; margin-top: auto; clip-path: polygon(0 0, 100% 0, 50% 100%); }
.left { width: 10px; height: 14px; clip-path: polygon(100% 0, 100% 100%, 0 50%); }
.right { width: 10px; height: 14px; clip-path: polygon(0 0, 100% 50%, 0 100%); }
.thumb { background: #495057; border-radius: 6px; }
.vscroll .thumb { width: 14px; height: 105px; }
.vscroll .up { margin-bottom: 438px; }
.hscroll {
  width: 1732px; height: 28px; background: #1a1e21;
  display: flex; align-items: center; padding: 0 12px;
}
.hscroll .thumb { width: 290px; height: 14px; margin-left: 755px; }
.hscroll .right { margin-left: auto; }

/* document tabs */
.tabs { display: flex; gap: 16px; padding: 8px 0 0 8px; }
.tab {
  width: 336px; height: 60px; padding: 0 18px 2px 26px;
  display: flex; align-items: center;
  background: #495057; border-radius: 8px;
}
.tab svg { width: 32px; height: 32px; margin-right: 20.5px; }
.tab .close { width: 20px; height: 20px; margin: 2px 0 0 auto; fill: none; stroke: #868e96; stroke-width: 3.500; }
.tab.page { width: 234px; padding-left: 27px; }
.page svg { width: 30px; height: 30px; margin-right: 21px; }
.tab.active, .ptab.active { background: #1f344f; }

.splitter { width: 8px; background: #2b3035; flex: none; }

/* tasks panel */
.panel { width: 718px; display: flex; flex-direction: column; }
.panel-title { height: 38px; flex: none; display: flex; align-items: center; color: #9ea5ab; padding-right: 9px; }
.panel-title span { margin: -2px auto 0 294px; }
.panel-title svg { width: 20px; height: 20px; margin-left: 26px; fill: none; stroke: #495057; stroke-width: 1.800; }
.panel-body { height: 1006px; flex: none; display: flex; }
.task { width: 690px; padding: 0 16px; }
.task-head {
  height: 66px; padding: 16px 18px 2px 13px; border-bottom: 6px solid #495057; border-radius: 0 0 3px 3px;
  display: flex; align-items: center;
}
.task-head svg { width: 26px; height: 28px; margin-right: 7px; fill: none; stroke: #f2d91c; stroke-width: 2.400; }
.task-head b { font-weight: 700; }
.task-head i { margin: -5px -1px 0 auto; width: 13px; height: 10px; background: #f1f3f5; clip-path: polygon(50% 0, 100% 100%, 0 100%); }
h3 { margin: 0; height: 58px; padding: 12px 0 0 26px; font-size: 24px; line-height: 33px; font-weight: 400; }
h3.first { margin-top: 14px; }
.grid { display: grid; gap: 12px; margin-left: 26px; align-items: start; }
.gdt-grid { grid-template-columns: 112px 112px 110px 112px 112px; grid-template-rows: 56px 58px 58px; }
.mod-grid { grid-template-columns: 112px 112px 112px 112px 110px; grid-auto-rows: 54px; }
.rad-grid { grid-template-columns: 110px 110px 116px 112px 110px; grid-auto-rows: 56px; }
.ang-grid { grid-template-columns: 142px 144px 142px 142px; grid-auto-rows: 54px; }
.oth-grid { grid-template-columns: 112px 112px 110px 112px 112px; grid-template-rows: 56px 58px; }
.grid button {
  height: 56px; padding: 0; border: 0; border-radius: 4px;
  display: flex; align-items: center; justify-content: center;
  background: #495057; color: #dee2e6; font: inherit;
}
.mod-grid button, .ang-grid button, .grid .short { height: 54px; }
.grid .tall { height: 58px; }
.grid .low { margin-top: 2px; }
.rad-grid button { padding-bottom: 2px; }
.grid svg { width: 32px; height: 32px; fill: none; stroke: #dee2e6; stroke-width: 2; }
.grid svg.dia { width: 14px; }
.grid .fill { fill: #dee2e6; stroke: none; }
.grid .thin { stroke-width: 1.200; }
.grid .mid { stroke-width: 1.600; }
.ring {
  width: 28px; height: 34px;
  display: flex; align-items: center; justify-content: center;
  font: 24px/34px "Inter", sans-serif;
  background: radial-gradient(circle at 14px 17px, transparent 14.600px, #dee2e6 15.200px 16.200px, transparent 16.800px);
}
.pscroll .up { margin-bottom: 93px; }
.pscroll .thumb { width: 14px; height: 644px; }

.panel-tabs { display: flex; gap: 16px; padding: 8px 0 0 8px; }
.ptab {
  width: 192px; height: 54px; padding-bottom: 2px;
  display: flex; align-items: center; justify-content: center;
  background: #495057; border-radius: 8px;
}
.ptab:nth-child(2) { width: 208px; }
.ptab:nth-child(3) { width: 178px; justify-content: flex-start; padding-left: 26px; }
.ptab svg { width: 32px; height: 32px; margin-right: 21px; }

/* status bar */
.status { height: 66px; display: flex; justify-content: flex-end; gap: 12px; padding: 6px 2px 0 0; }
.cell {
  position: relative; height: 54px; padding-bottom: 2px; background: #495057; border-radius: 4px;
  display: flex; align-items: center;
}
.cell::after {
  content: ""; position: absolute; right: 6px; top: 36px; width: 15px; height: 8px;
  background: #adb5bd; clip-path: polygon(0 0, 100% 0, 50% 100%);
}
.count { width: 176px; padding-left: 44px; }
.count svg { width: 28px; height: 26px; margin-right: 10px; }
.nav { width: 216px; padding-left: 60px; }
.nav svg { width: 20px; height: 28px; margin-right: 10px; }
.dims { width: 358px; padding-left: 42px; }

.tooltip {
  position: absolute; left: 2048px; top: 156px; width: 194px; height: 78px;
  display: flex; align-items: center; justify-content: center;
  padding: 0 2px 2px 0;
  background: #1c7ed6; border: 2px solid #225585; color: #fff;
  box-shadow: 0 4px 14px rgba(0,0,0,.35);
}
```
